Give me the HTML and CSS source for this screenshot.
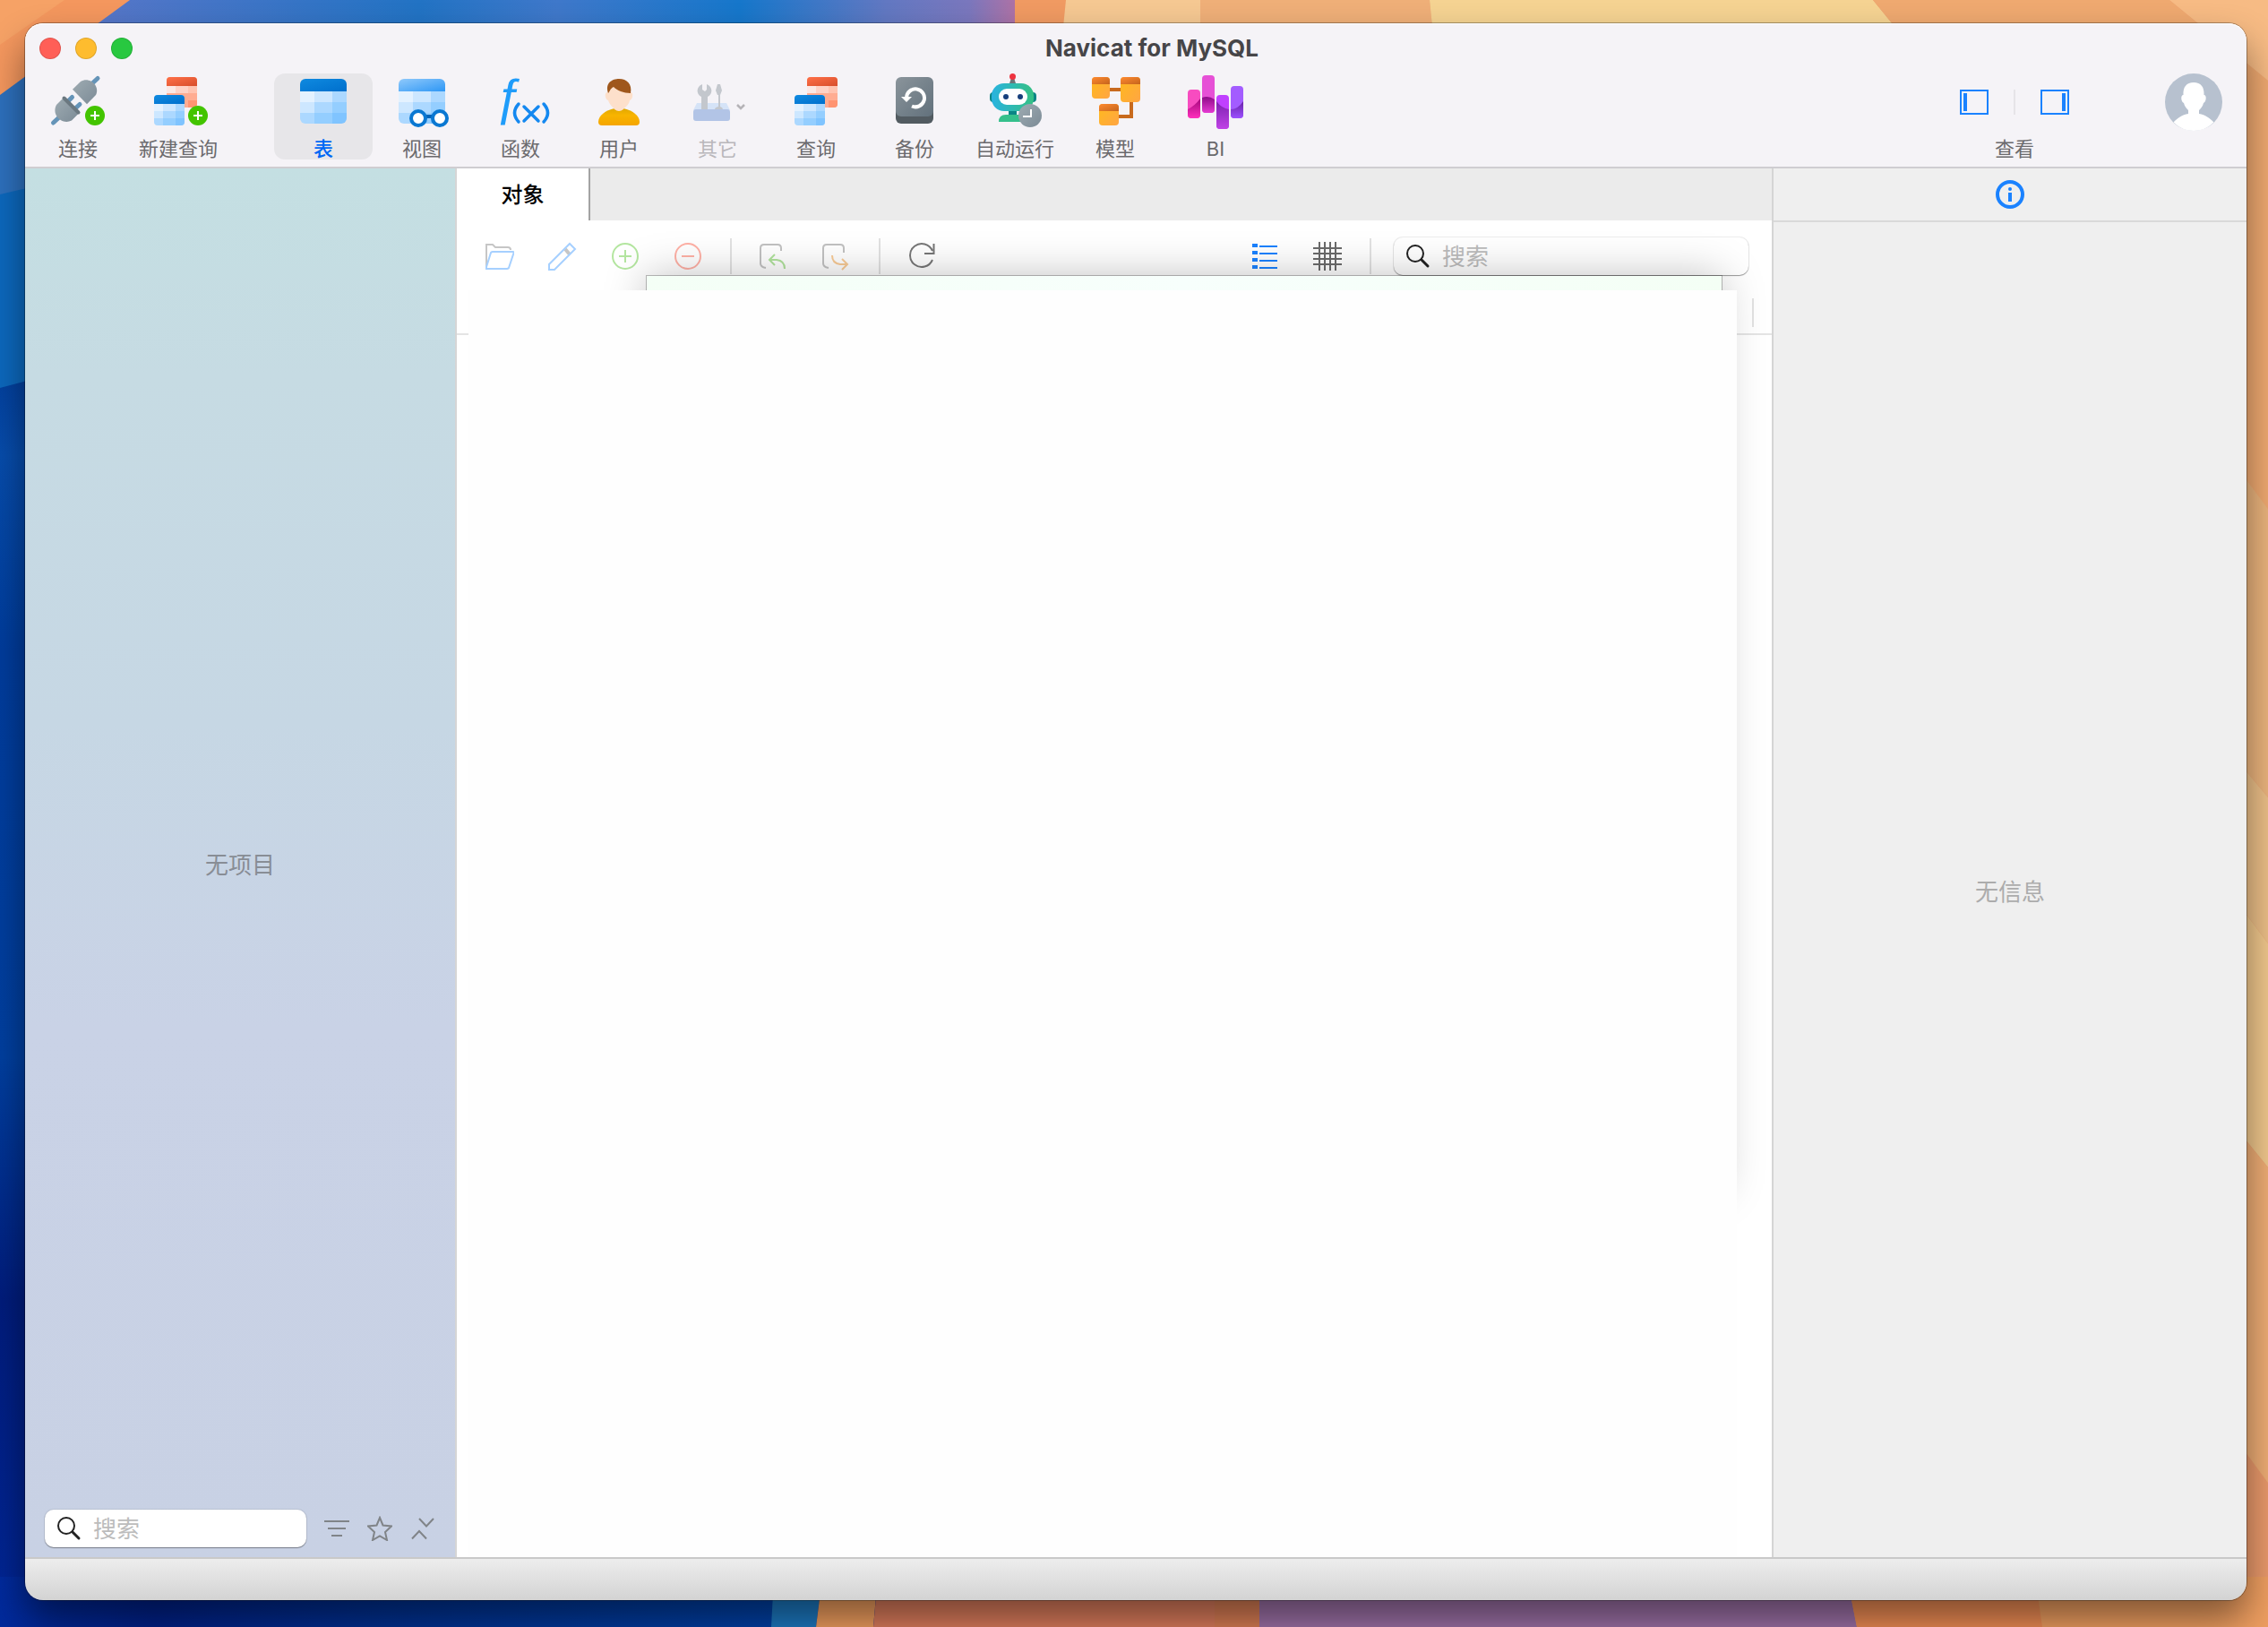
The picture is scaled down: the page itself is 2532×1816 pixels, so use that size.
FILE: index.html
```html
<!DOCTYPE html>
<html lang="zh-CN">
<head>
    <meta charset="UTF-8">
    <meta name="viewport" content="width=device-width, initial-scale=1.0">
    <title>Navicat for MySQL</title>
    <link rel="stylesheet" href="styles.css">
</head>
<body>
    <!-- Desktop wallpaper -->
    <svg class="wallpaper" viewBox="0 0 2532 1816" preserveAspectRatio="none" aria-hidden="true">
        <defs>
            <linearGradient id="wpLeft" x1="0" y1="0" x2="0" y2="1">
                <stop offset="0.2" stop-color="#003894"/>
                <stop offset="0.28" stop-color="#074cab"/>
                <stop offset="0.4" stop-color="#003c9c"/>
                <stop offset="0.65" stop-color="#003f9f"/>
                <stop offset="0.8" stop-color="#001c7c"/>
                <stop offset="1" stop-color="#002696"/>
            </linearGradient>
            <linearGradient id="wpTop" gradientUnits="userSpaceOnUse" x1="110" y1="0" x2="1133" y2="0">
                <stop offset="0" stop-color="#5676c8"/>
                <stop offset="0.35" stop-color="#2273c4"/>
                <stop offset="0.5" stop-color="#3f78ca"/>
                <stop offset="0.7" stop-color="#1677cb"/>
                <stop offset="0.86" stop-color="#6278c2"/>
                <stop offset="0.95" stop-color="#7a77bd"/>
                <stop offset="1" stop-color="#ad72a6"/>
            </linearGradient>
            <linearGradient id="wpBottom" x1="0" y1="0" x2="1" y2="0">
                <stop offset="0" stop-color="#002a9c"/>
                <stop offset="0.2" stop-color="#002086"/>
                <stop offset="0.5" stop-color="#003090"/>
                <stop offset="1" stop-color="#0040a4"/>
            </linearGradient>
        </defs>
        <rect width="2532" height="1816" fill="#e8986a"/>
        <rect width="1000" height="1816" fill="url(#wpLeft)"/>
        <path d="M0 100L200 0V380L0 433z" fill="#0c68bd"/>
        <path d="M0 90L200 0V170L0 217z" fill="#2d70bd"/>
        <path d="M100 0H1133V60H100z" fill="url(#wpTop)"/>
        <path d="M0 0H145L0 106z" fill="#f4975e"/>
        <path d="M0 0H72L0 50z" fill="#f6a266"/>
        <path d="M1133 0H1190L1184 60H1133z" fill="#f09a62"/>
        <path d="M1190 0H1340V60H1184z" fill="#f5c892"/>
        <path d="M1340 0H1596L1602 60H1340z" fill="#efaf78"/>
        <path d="M1596 0H2091L2140 60H1602z" fill="#f5d392"/>
        <path d="M2091 0H2422L2532 90V568L2440 500V60H2140z" fill="#efa970"/>
        <path d="M2422 0H2532V90z" fill="#f7bb84"/>
        <path d="M2440 445L2532 568V890L2440 780z" fill="#eab37c"/>
        <path d="M2440 780L2532 890V1053L2440 930z" fill="#ebbe87"/>
        <path d="M2440 930L2532 1053V1303L2440 1190z" fill="#efc68b"/>
        <path d="M2440 1190L2532 1303V1655L2440 1530z" fill="#edac74"/>
        <path d="M0 1760H866V1816H0z" fill="url(#wpBottom)"/>
        <path d="M864 1760H918L911 1816H861z" fill="#1c78c0"/>
        <path d="M918 1760H980L975 1816H911z" fill="#f09e5e"/>
        <path d="M980 1760H1356V1816H975z" fill="#dc7c5c"/>
        <path d="M1356 1760H1406V1816H1356z" fill="#d97d54"/>
        <path d="M1406 1760H2062L2073 1816H1406z" fill="#9c70a6"/>
        <path d="M2062 1760H2532V1816H2073z" fill="#ee8c54"/>
        <path d="M2272 1760H2532V1816H2280z" fill="#ee9e60"/>
    </svg>

    <!-- Shared icon pieces -->
    <svg class="defs" aria-hidden="true">
        <defs>
            <linearGradient id="blueHead" x1="0" y1="0" x2="1" y2="1">
                <stop offset="0" stop-color="#0f8ae0"/>
                <stop offset="1" stop-color="#006fcc"/>
            </linearGradient>
            <linearGradient id="lightHead" x1="0" y1="0" x2="1" y2="1">
                <stop offset="0" stop-color="#8fc9fb"/>
                <stop offset="1" stop-color="#2e97f5"/>
            </linearGradient>
            <linearGradient id="redHead" x1="0" y1="0" x2="1" y2="1">
                <stop offset="0" stop-color="#ff7048"/>
                <stop offset="1" stop-color="#d74e2c"/>
            </linearGradient>
            <linearGradient id="steel" x1="0" y1="0" x2="1" y2="1">
                <stop offset="0" stop-color="#9eabb2"/>
                <stop offset="1" stop-color="#7c8b96"/>
            </linearGradient>
            <linearGradient id="shirt" x1="0" y1="0" x2="0" y2="1">
                <stop offset="0" stop-color="#e0a800"/>
                <stop offset="0.4" stop-color="#f8b400"/>
                <stop offset="1" stop-color="#f5a500"/>
            </linearGradient>
            <linearGradient id="disk" x1="0" y1="0" x2="1" y2="1">
                <stop offset="0" stop-color="#8a949b"/>
                <stop offset="1" stop-color="#62717c"/>
            </linearGradient>
            <linearGradient id="robot" x1="0" y1="0" x2="1" y2="0">
                <stop offset="0" stop-color="#29b3e0"/>
                <stop offset="1" stop-color="#35c083"/>
            </linearGradient>
            <linearGradient id="boxBody" x1="0" y1="0" x2="1" y2="1">
                <stop offset="0" stop-color="#ffba1c"/>
                <stop offset="1" stop-color="#ffa544"/>
            </linearGradient>
            <linearGradient id="boxHead" x1="0" y1="0" x2="1" y2="1">
                <stop offset="0" stop-color="#ff8a30"/>
                <stop offset="1" stop-color="#c5641c"/>
            </linearGradient>
            <linearGradient id="bi1" x1="0" y1="0" x2="0" y2="1">
                <stop offset="0" stop-color="#a3087c"/>
                <stop offset="1" stop-color="#ff30bc"/>
            </linearGradient>
            <linearGradient id="bi2" x1="0" y1="0" x2="0" y2="1">
                <stop offset="0" stop-color="#8e0a88"/>
                <stop offset="1" stop-color="#e53ad2"/>
            </linearGradient>
            <linearGradient id="bi3" x1="0" y1="0" x2="0" y2="1">
                <stop offset="0" stop-color="#7d22b0"/>
                <stop offset="1" stop-color="#c042e6"/>
            </linearGradient>
            <linearGradient id="bi4" x1="0" y1="0" x2="0" y2="1">
                <stop offset="0" stop-color="#6a22a8"/>
                <stop offset="1" stop-color="#9c50ff"/>
            </linearGradient>
            <clipPath id="r52"><rect width="52" height="50" rx="6"/></clipPath>
            <clipPath id="r34"><rect width="34" height="34" rx="4"/></clipPath>
            <clipPath id="b1"><rect x="26" y="18" width="14" height="32" rx="4"/></clipPath>
            <clipPath id="b2"><rect x="42" y="2" width="14" height="42" rx="4"/></clipPath>
            <clipPath id="b3"><rect x="58" y="24" width="14" height="38" rx="4"/></clipPath>
            <clipPath id="b4"><rect x="74" y="14" width="14" height="36" rx="4"/></clipPath>
            <g id="gridCells">
                <path fill="#e4f2ff" d="M0 14h16v12H0z"/>
                <path fill="#cde7ff" d="M16 14h20v12H16zM0 26h16v12H0z"/>
                <path fill="#acd8ff" d="M36 14h16v12H36zM16 26h20v12H16zM0 38h16v12H0z"/>
                <path fill="#94ceff" d="M36 26h16v12H36zM16 38h20v12H16z"/>
                <path fill="#80c4ff" d="M36 38h16v12H36z"/>
            </g>
            <g id="twoTables">
                <g transform="translate(14 0)" clip-path="url(#r34)">
                    <rect width="34" height="34" fill="#ffac92"/>
                    <path fill="#fce8e4" d="M0 10h10v8H0z"/>
                    <path fill="#ffd2c6" d="M10 10h14v8H10z"/>
                    <path fill="#ffc3b0" d="M24 10h10v8H24z"/>
                    <path fill="#ff9472" d="M24 26h10v8H24z"/>
                    <rect width="34" height="10" fill="url(#redHead)"/>
                </g>
                <g transform="translate(0 20)" clip-path="url(#r34)">
                    <rect width="34" height="34" fill="#acd8ff"/>
                    <path fill="#e4f2ff" d="M0 10h10v8H0z"/>
                    <path fill="#cde7ff" d="M10 10h14v8H10zM0 18h10v8H0z"/>
                    <path fill="#94ceff" d="M24 18h10v8H24zM10 26h14v8H10z"/>
                    <path fill="#80c4ff" d="M24 26h10v8H24z"/>
                    <rect width="34" height="10" fill="url(#blueHead)"/>
                </g>
            </g>
            <g id="addBadge">
                <circle r="11" fill="#43c400"/>
                <path d="M-5 0H5M0-5V5" stroke="#fff" stroke-width="2"/>
            </g>
            <g id="magnifier" fill="none" stroke="#222" stroke-linecap="round">
                <circle cx="10" cy="10" r="9" stroke-width="2"/>
                <path d="M17 17l7 7" stroke-width="3"/>
            </g>
        </defs>
    </svg>

    <div class="window">
        <header class="header">
            <div class="titlebar">
                <div class="lights">
                    <button class="light close" aria-label="关闭"></button>
                    <button class="light minimize" aria-label="最小化"></button>
                    <button class="light zoom" aria-label="缩放"></button>
                </div>
                <h1 class="title">Navicat for MySQL</h1>
            </div>

            <div class="toolbar">
                <nav class="tools">
                    <button class="tool">
                        <svg viewBox="0 0 110 68" width="110" height="68">
                            <g stroke="#6594b8" stroke-width="5" stroke-linecap="round">
                                <path d="M77 5.500L70 12M27.500 55L34 49M48.500 26.500L43 32M57 34.500L51 40"/>
                            </g>
                            <path d="M49 17.700L58 9C68 3 80 14 75 24L65 34.300z" fill="url(#steel)"/>
                            <path d="M38.500 27.500L31 35C25 46 37 58 48 52.500L55.500 45z" fill="url(#steel)"/>
                            <path d="M39.500 27.500L55.500 43.500" stroke="#6b7880" stroke-width="4" stroke-linecap="round"/>
                            <use href="#addBadge" x="74" y="47"/>
                        </svg>
                        <span>连接</span>
                    </button>
                    <button class="tool wide">
                        <svg viewBox="0 0 114 68" width="114" height="68">
                            <use href="#twoTables" x="30" y="4"/>
                            <use href="#addBadge" x="79" y="47"/>
                        </svg>
                        <span>新建查询</span>
                    </button>
                    <button class="tool first active">
                        <svg viewBox="0 0 110 68" width="110" height="68">
                            <g transform="translate(29 6)" clip-path="url(#r52)">
                                <use href="#gridCells"/>
                                <rect width="52" height="14" fill="url(#blueHead)"/>
                            </g>
                        </svg>
                        <span>表</span>
                    </button>
                    <button class="tool">
                        <svg viewBox="0 0 110 68" width="110" height="68">
                            <g transform="translate(29 6)" clip-path="url(#r52)">
                                <use href="#gridCells"/>
                                <rect width="52" height="14" fill="url(#lightHead)"/>
                            </g>
                            <path d="M59 48h8" stroke="#0064b8" stroke-width="4"/>
                            <circle cx="51" cy="50" r="8" fill="#fff" stroke="#0a78d2" stroke-width="4"/>
                            <circle cx="75" cy="50" r="8" fill="#fff" stroke="#0a78d2" stroke-width="4"/>
                        </svg>
                        <span>视图</span>
                    </button>
                    <button class="tool">
                        <svg class="fx-icon" viewBox="0 0 110 68" width="110" height="68">
                            <text class="fx" x="25" y="45">ƒ</text>
                            <g fill="none" stroke="#1488f0" stroke-width="3.500" stroke-linecap="round">
                                <path d="M53 34Q44 44 53 54M81 34Q90 44 81 54M59 37L75 53M75 37L59 53"/>
                            </g>
                        </svg>
                        <span>函数</span>
                    </button>
                    <button class="tool">
                        <svg viewBox="0 0 110 68" width="110" height="68">
                            <path d="M50 39H60C70 41 78 47 78 54Q78 58 74 58H36Q32 58 32 54C32 47 40 41 50 39z" fill="url(#shirt)"/>
                            <path d="M42 21C38 21 40 30 43 30C45 36 49 38 50 40Q55 44 60 40C61 38 66 36 67 30C70 30 72 21 68 21L64 12H46z" fill="#fde0cb"/>
                            <path d="M43 22C39 10 48 6 55 6C64 6 70 12 68 22C60 22 53 19 49 15C45 17 45 20 43 22z" fill="#9f571c"/>
                        </svg>
                        <span>用户</span>
                    </button>
                    <button class="tool" disabled>
                        <svg viewBox="0 0 110 68" width="110" height="68">
                            <path d="M32 33H65L69 41H28z" fill="#d5e3f7"/>
                            <g fill="#c3c7cd">
                                <path d="M38 12C31 15 31 23 37 26V40H44V26C50 23 50 15 43 12V18L41 20L38 18z"/>
                                <path d="M55 12H58L60 19L58 24H55L53 19zM56 24H58V37Q61 38 61 40H52Q52 38 56 37z"/>
                            </g>
                            <rect x="28" y="40" width="41" height="13" rx="3" fill="#b2c4e6"/>
                            <path d="M77 35l4 4 4-4" fill="none" stroke="#b5b3b7" stroke-width="2.500"/>
                        </svg>
                        <span>其它</span>
                    </button>
                    <button class="tool">
                        <svg viewBox="0 0 110 68" width="110" height="68">
                            <use href="#twoTables" x="31" y="4"/>
                        </svg>
                        <span>查询</span>
                    </button>
                    <button class="tool">
                        <svg viewBox="0 0 110 68" width="110" height="68">
                            <rect x="34" y="20" width="42" height="36" rx="6" fill="#525b61"/>
                            <rect x="34" y="4" width="42" height="44" rx="6" fill="url(#disk)"/>
                            <path d="M46 27A10 10 0 1 1 52 36.500" fill="none" stroke="#fff" stroke-width="4"/>
                            <path d="M40 26H52L46 32z" fill="#fff"/>
                        </svg>
                        <span>备份</span>
                    </button>
                    <button class="tool wide">
                        <svg viewBox="0 0 114 68" width="114" height="68">
                            <path d="M53 5H56L58 11H51z" fill="#6d7478"/>
                            <circle cx="54.500" cy="3.500" r="3.500" fill="#ee3340"/>
                            <rect x="29" y="21" width="52" height="11" rx="4" fill="#0a8585"/>
                            <rect x="31" y="11" width="47" height="31" rx="14" fill="url(#robot)"/>
                            <rect x="39" y="17" width="32" height="18" rx="9" fill="#fff"/>
                            <circle cx="47" cy="26" r="3" fill="#173f7c"/>
                            <circle cx="63" cy="26" r="3" fill="#173f7c"/>
                            <rect x="50" y="42" width="9" height="4" fill="#0a8585"/>
                            <path d="M39 54Q39 46 47 46H70V54z" fill="#35c08c"/>
                            <circle cx="74" cy="47" r="13" fill="url(#steel)"/>
                            <path d="M75 40V48H66" fill="none" stroke="#fff" stroke-width="2"/>
                        </svg>
                        <span>自动运行</span>
                    </button>
                    <button class="tool">
                        <svg viewBox="0 0 110 68" width="110" height="68">
                            <path d="M49 18H61M73 32V48H59" fill="none" stroke="#c86a1e" stroke-width="4"/>
                            <rect x="29" y="4" width="20" height="24" rx="4" fill="url(#boxBody)"/>
                            <path d="M29 12V8Q29 4 33 4H45Q49 4 49 8V12z" fill="url(#boxHead)"/>
                            <rect x="61" y="4" width="22" height="28" rx="4" fill="url(#boxBody)"/>
                            <path d="M61 12V8Q61 4 65 4H79Q83 4 83 8V12z" fill="url(#boxHead)"/>
                            <rect x="37" y="34" width="22" height="24" rx="4" fill="url(#boxBody)"/>
                            <path d="M37 42V38Q37 34 41 34H55Q59 34 59 38V42z" fill="url(#boxHead)"/>
                        </svg>
                        <span>模型</span>
                    </button>
                    <button class="tool wide">
                        <svg viewBox="0 0 114 68" width="114" height="68">
                            <g clip-path="url(#b1)">
                                <path d="M26 18h14v32H26z" fill="#f74cc0"/>
                                <path d="M26 40Q34 36 40 28V50H26z" fill="url(#bi1)"/>
                            </g>
                            <g clip-path="url(#b2)">
                                <path d="M42 2h14v42H42z" fill="#e650d6"/>
                                <path d="M42 27Q49 24 56 29V44H42z" fill="url(#bi2)"/>
                            </g>
                            <g clip-path="url(#b3)">
                                <path d="M58 24h14v38H58z" fill="#c040ff"/>
                                <path d="M58 31Q64 39 72 40V62H58z" fill="url(#bi3)"/>
                            </g>
                            <g clip-path="url(#b4)">
                                <path d="M74 14h14v36H74z" fill="#a35cff"/>
                                <path d="M74 40Q82 40 88 31V50H74z" fill="url(#bi4)"/>
                            </g>
                        </svg>
                        <span>BI</span>
                    </button>
                </nav>

                <div class="view">
                    <div class="view-buttons">
                        <button aria-label="导航窗格">
                            <svg viewBox="0 0 32 28" width="32" height="28">
                                <rect x="1" y="1" width="30" height="26" fill="none" stroke="#1a82ff" stroke-width="2"/>
                                <rect x="4" y="4" width="4" height="20" fill="#1a82ff"/>
                            </svg>
                        </button>
                        <span class="view-sep"></span>
                        <button aria-label="信息窗格">
                            <svg viewBox="0 0 32 28" width="32" height="28">
                                <rect x="1" y="1" width="30" height="26" fill="none" stroke="#1a82ff" stroke-width="2"/>
                                <rect x="24" y="4" width="4" height="20" fill="#1a82ff"/>
                            </svg>
                        </button>
                    </div>
                    <span class="view-label">查看</span>
                </div>
                <button class="avatar" aria-label="帐户">
                    <svg viewBox="0 0 64 64" width="64" height="64">
                        <circle cx="32" cy="32" r="32" fill="#b7c1cf"/>
                        <path d="M32 10C24 10 20 15 20.500 24C17 24 18 32 21 33C22 37 24 39 26 41V45C19 46 14 50 9.500 54.500Q19 64 32 64T54.500 54.500C50 50 45 46 38 45V41C40 39 42 37 43 33C46 32 47 24 43.500 24C44 15 40 10 32 10z" fill="#fff"/>
                    </svg>
                </button>
            </div>
        </header>

        <div class="panes">
            <aside class="sidebar">
                <p class="empty">无项目</p>
                <div class="sidebar-footer">
                    <label class="search">
                        <svg viewBox="-2 -2 30 30" width="30" height="30"><use href="#magnifier"/></svg>
                        <input type="search" placeholder="搜索" aria-label="搜索连接">
                    </label>
                    <button class="icon-button" aria-label="筛选">
                        <svg viewBox="0 0 28 28" width="28" height="28" fill="none" stroke="#808488" stroke-width="2">
                            <path d="M0 6H28M4 14H24M8 22H20"/>
                        </svg>
                    </button>
                    <button class="icon-button" aria-label="收藏">
                        <svg viewBox="0 0 28 28" width="28" height="28" fill="none" stroke="#808488" stroke-width="2">
                            <path d="M14 2L17.500 10.500L27 11.500L20 18L22 27L14 22.500L6 27L8 18L1 11.500L10.500 10.500z"/>
                        </svg>
                    </button>
                    <button class="icon-button" aria-label="折叠">
                        <svg viewBox="0 0 28 28" width="28" height="28" fill="none" stroke="#808488" stroke-width="2">
                            <path d="M10 3L18 11.500L26 3M2 25.500L10 17L18 25.500"/>
                        </svg>
                    </button>
                </div>
            </aside>

            <main class="main">
                <div class="tabs">
                    <button class="tab">对象</button>
                </div>
                <div class="object-bar">
                    <button class="icon-button" aria-label="打开">
                        <svg viewBox="0 0 32 32" width="32" height="32" fill="none" stroke-width="2">
                            <path d="M1 28V3H8L11 6H25Q28 6 28 9" stroke="#c6c6c6"/>
                            <path d="M8 11H31Q32 12 31 14L26 29Q25 30 24 30H1V28L6 12Q7 11 8 11z" stroke="#a6d0ff"/>
                        </svg>
                    </button>
                    <button class="icon-button" aria-label="编辑">
                        <svg viewBox="0 0 32 32" width="32" height="32" fill="none" stroke-width="2">
                            <path d="M19 8L24 14" stroke="#c6c6c6" stroke-width="4"/>
                            <path d="M1 31V25L24 2L30 8L7 31z" stroke="#a6d0ff"/>
                        </svg>
                    </button>
                    <button class="icon-button" aria-label="新建">
                        <svg viewBox="0 0 32 32" width="32" height="32" fill="none" stroke="#b4e6a0" stroke-width="2">
                            <circle cx="16" cy="16" r="14"/>
                            <path d="M9 16H23M16 9V23"/>
                        </svg>
                    </button>
                    <button class="icon-button" aria-label="删除">
                        <svg viewBox="0 0 32 32" width="32" height="32" fill="none" stroke="#ffb1a6" stroke-width="2">
                            <circle cx="16" cy="16" r="14"/>
                            <path d="M9 16H23"/>
                        </svg>
                    </button>
                    <span class="sep"></span>
                    <button class="icon-button" aria-label="导入">
                        <svg viewBox="0 0 32 32" width="32" height="32" fill="none" stroke-width="2">
                            <path d="M24 10V7Q24 3 20 3H5Q1 3 1 7V24Q1 28 7 29" stroke="#c2c2c2"/>
                            <path d="M17 14L11 20L17 26M11 20H19Q28 21 28 30" stroke="#b0e29c"/>
                        </svg>
                    </button>
                    <button class="icon-button" aria-label="导出">
                        <svg viewBox="0 0 32 32" width="32" height="32" fill="none" stroke-width="2">
                            <path d="M24 12V7Q24 3 20 3H5Q1 3 1 7V24Q1 28 7 29" stroke="#c2c2c2"/>
                            <path d="M22 19L28 25L22 31M28 25H20Q11 24 11 15" stroke="#f8cb96"/>
                        </svg>
                    </button>
                    <span class="sep"></span>
                    <button class="icon-button" aria-label="刷新">
                        <svg viewBox="0 0 32 32" width="32" height="32" fill="none" stroke="#777" stroke-width="2">
                            <path d="M27 20A13 13 0 1 1 27 10M28.500 2V13H18"/>
                        </svg>
                    </button>
                    <span class="spacer"></span>
                    <button class="icon-button" aria-label="列表">
                        <svg viewBox="0 0 32 32" width="32" height="32" fill="#1a82ff">
                            <path d="M2 2h6v4H2zM2 10h6v4H2zM2 18h6v4H2zM2 26h6v4H2zM10 4h20v2H10zM10 12h20v2H10zM10 20h20v2H10zM10 28h20v2H10z"/>
                        </svg>
                    </button>
                    <button class="icon-button" aria-label="网格">
                        <svg viewBox="0 0 32 32" width="32" height="32" fill="none" stroke="#6b6b6b" stroke-width="2">
                            <path d="M0 7H32M0 13H32M0 19H32M0 25H32M7 0V32M13 0V32M19 0V32M25 0V32"/>
                        </svg>
                    </button>
                    <span class="sep"></span>
                    <label class="search">
                        <svg viewBox="-2 -2 30 30" width="30" height="30"><use href="#magnifier"/></svg>
                        <input type="search" placeholder="搜索" aria-label="搜索对象">
                    </label>
                </div>
                <div class="column-head"><span></span></div>

                <!-- Sheet sliding out from behind the blank area -->
                <div class="sheet"></div>
                <div class="blank"></div>
            </main>

            <aside class="info">
                <div class="info-head">
                    <button class="icon-button" aria-label="常规">
                        <svg viewBox="0 0 32 32" width="32" height="32">
                            <circle cx="16" cy="16" r="14" fill="none" stroke="#1a82ff" stroke-width="4"/>
                            <circle cx="16" cy="10" r="2" fill="#1a82ff"/>
                            <rect x="14" y="14" width="4" height="10" fill="#1a82ff"/>
                        </svg>
                    </button>
                </div>
                <p class="empty">无信息</p>
            </aside>
        </div>

        <footer class="status"></footer>
    </div>
</body>
</html>
```
FILE: styles.css
```css
* {
    box-sizing: border-box;
}
body {
    margin: 0;
    height: 100vh;
    padding: 26px 24px 30px 28px;
    overflow: hidden;
    font-family: Inter, "Noto Sans CJK SC", sans-serif;
    font-size: 22px;
    color: #6b6a6d;
}
button {
    padding: 0;
    border: none;
    background: none;
    font: inherit;
    color: inherit;
}
svg {
    display: block;
}
.wallpaper {
    position: absolute;
    top: 0;
    left: 0;
    width: 100%;
    height: 100%;
    z-index: -1;
}
.defs {
    position: absolute;
    width: 0;
    height: 0;
}
.window {
    display: flex;
    flex-direction: column;
    height: 100%;
    border-radius: 20px;
    box-shadow: 0 0 0 1px rgba(0, 0, 0, 0.3), 0 22px 40px rgba(0, 0, 0, 0.45);
}

/* Header */
.header {
    background-color: #f5f3f7;
    border-bottom: 2px solid #cfcdd1;
    border-radius: 20px 20px 0 0;
    box-shadow: inset 0 1px 0 #fff;
}
.titlebar {
    display: grid;
    grid-template-columns: 124px 1fr 104px;
    align-items: center;
    height: 56px;
    padding-left: 16px;
}
.lights {
    display: flex;
    gap: 16px;
}
.light {
    width: 24px;
    height: 24px;
    border-radius: 50%;
    border: 1px solid rgba(0, 0, 0, 0.12);
}
.close {
    background-color: #ff5f57;
}
.minimize {
    background-color: #febc2e;
}
.zoom {
    background-color: #28c840;
}
.title {
    margin: 0;
    font-size: 26px;
    line-height: 32px;
    font-weight: 700;
    text-align: center;
    color: #464548;
}
.toolbar {
    display: flex;
    align-items: flex-start;
    padding: 0 27px 8px 4px;
}
.tools {
    display: flex;
    flex: 1;
}
.tool {
    display: flex;
    flex-direction: column;
    align-items: center;
    gap: 4px;
    width: 110px;
    height: 96px;
    border-radius: 12px;
}
.tool.wide {
    width: 114px;
}
.tool.first {
    margin-left: 50px;
}
.tool span,
.view-label {
    line-height: 24px;
}
.tool.active {
    background-color: #e7e6e9;
    color: #0068f5;
    font-weight: 500;
}
.tool:disabled {
    color: #b9b7bb;
}
.fx-icon {
    overflow: visible;
}
.fx {
    font-family: "Liberation Sans", sans-serif;
    font-style: italic;
    font-size: 56px;
    fill: #1f9cfa;
}
.view {
    display: flex;
    flex-direction: column;
    align-items: center;
    gap: 4px;
    margin-right: 107px;
}
.view-buttons {
    display: flex;
    align-items: center;
    gap: 28px;
    height: 68px;
    padding-bottom: 4px;
}
.view-sep {
    width: 2px;
    height: 28px;
    background-color: #e6e4e8;
}
.avatar {
    height: 64px;
}

/* Panes */
.panes {
    display: flex;
    flex: 1;
    min-height: 0;
}
.empty {
    display: flex;
    flex: 1;
    align-items: center;
    justify-content: center;
    margin: 0;
    font-size: 26px;
    color: #acacac;
}
.sidebar {
    display: flex;
    flex-direction: column;
    width: 482px;
    border-right: 2px solid #d5d5d5;
    background-image: linear-gradient(#c4dfe2, #c6dbe3 15%, #c6d7e4 40%, #c9d2e6 62%, #c8d1e4);
}
.sidebar .empty {
    padding-top: 64px;
    color: #888d95;
}
.sidebar-footer {
    display: flex;
    align-items: center;
    gap: 20px;
    height: 64px;
    padding: 0 22px;
}
.search {
    display: flex;
    align-items: center;
    gap: 12px;
    height: 42px;
    padding-left: 12px;
    border-radius: 10px;
    background-color: #fff;
    box-shadow: 0 0 0 1px rgba(0, 0, 0, 0.07), 0 1px 1px rgba(0, 0, 0, 0.35);
}
.search svg {
    flex-shrink: 0;
}
.search input {
    width: 100%;
    padding: 0;
    border: none;
    background: none;
    outline: none;
    font: inherit;
    font-size: 26px;
}
.search input::placeholder {
    color: #bcbcbc;
}
.sidebar-footer .search {
    flex: 1;
}

/* Object list */
.main {
    position: relative;
    display: flex;
    flex-direction: column;
    flex: 1;
    min-width: 0;
    overflow: hidden;
    background-color: #fff;
}
.tabs {
    display: flex;
    height: 58px;
    background-color: #ebebeb;
}
.tab {
    width: 149px;
    padding-bottom: 4px;
    border-right: 2px solid #a3a3a3;
    background-color: #fff;
    color: #000;
    font-size: 24px;
    font-weight: 500;
}
.object-bar {
    display: flex;
    align-items: center;
    gap: 38px;
    height: 80px;
    padding: 0 26px 0 32px;
}
.sep {
    width: 2px;
    height: 40px;
    margin: 0 -7px;
    background-color: #e2e2e2;
}
.spacer {
    flex: 1;
}
.object-bar .search {
    width: 396px;
    margin-left: -6px;
}
.column-head {
    display: flex;
    align-items: center;
    justify-content: flex-end;
    height: 48px;
    padding-right: 20px;
    border-bottom: 2px solid #e4e4e4;
}
.column-head span {
    width: 2px;
    height: 32px;
    background-color: #e2e2e2;
}
.sheet {
    position: absolute;
    top: 120px;
    left: 212px;
    right: 56px;
    height: 1020px;
    background-image: linear-gradient(90deg, #f4fff6, #f7fffc 50%, #f4fff5);
    box-shadow: 0 0 0 1px rgba(0, 0, 0, 0.25), 0 0 44px rgba(0, 0, 0, 0.25);
}
.blank {
    position: absolute;
    top: 136px;
    bottom: 0;
    left: 13px;
    right: 39px;
    background-color: #fefefe;
}

/* Info pane */
.info {
    display: flex;
    flex-direction: column;
    width: 530px;
    border-left: 2px solid #d5d5d5;
    background-color: #efefef;
}
.info-head {
    display: flex;
    align-items: center;
    justify-content: center;
    height: 60px;
    border-bottom: 2px solid #d9d9d9;
}

.status {
    height: 48px;
    border-top: 2px solid #c9c9c9;
    border-radius: 0 0 20px 20px;
    background-image: linear-gradient(#ededed, #d3d3d3);
}
```
